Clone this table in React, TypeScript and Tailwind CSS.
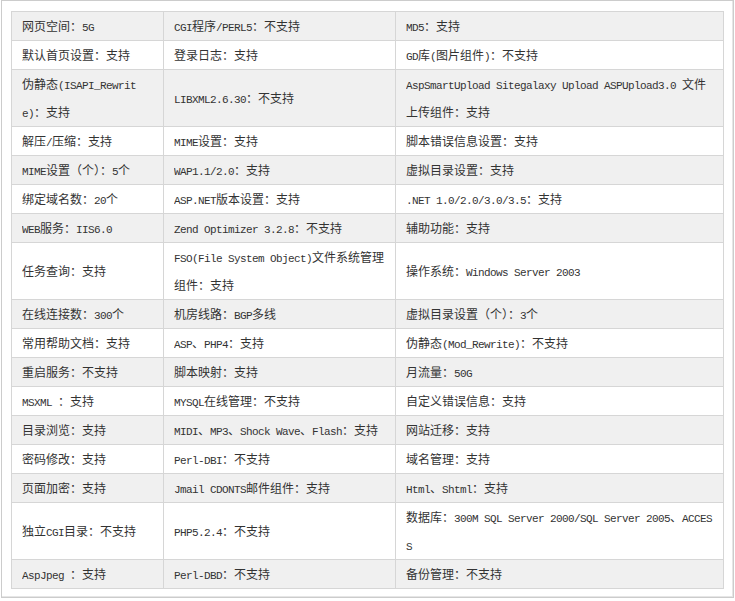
import React from 'react';

// each cell: "\n" marks where the reference wraps the line
const rows: string[][] = [
  ['网页空间：5G', 'CGI程序/PERL5：不支持', 'MD5：支持'],
  ['默认首页设置：支持', '登录日志：支持', 'GD库(图片组件)：不支持'],
  ['伪静态(ISAPI_Rewrit\ne)：支持', 'LIBXML2.6.30：不支持', 'AspSmartUpload Sitegalaxy Upload ASPUpload3.0 文件\n上传组件：支持'],
  ['解压/压缩：支持', 'MIME设置：支持', '脚本错误信息设置：支持'],
  ['MIME设置（个）：5个', 'WAP1.1/2.0：支持', '虚拟目录设置：支持'],
  ['绑定域名数：20个', 'ASP.NET版本设置：支持', '.NET 1.0/2.0/3.0/3.5：支持'],
  ['WEB服务：IIS6.0', 'Zend Optimizer 3.2.8：不支持', '辅助功能：支持'],
  ['任务查询：支持', 'FSO(File System Object)文件系统管理\n组件：支持', '操作系统：Windows Server 2003'],
  ['在线连接数：300个', '机房线路：BGP多线', '虚拟目录设置（个）：3个'],
  ['常用帮助文档：支持', 'ASP、PHP4：支持', '伪静态(Mod_Rewrite)：不支持'],
  ['重启服务：不支持', '脚本映射：支持', '月流量：50G'],
  ['MSXML ：支持', 'MYSQL在线管理：不支持', '自定义错误信息：支持'],
  ['目录浏览：支持', 'MIDI、MP3、Shock Wave、Flash：支持', '网站迁移：支持'],
  ['密码修改：支持', 'Perl-DBI：不支持', '域名管理：支持'],
  ['页面加密：支持', 'Jmail CDONTS邮件组件：支持', 'Html、Shtml：支持'],
  ['独立CGI目录：不支持', 'PHP5.2.4：不支持', '数据库：300M SQL Server 2000/SQL Server 2005、ACCES\nS'],
  ['AspJpeg ：支持', 'Perl-DBD：不支持', '备份管理：不支持'],
];

// latin runs are set in a narrow mono face so they take half a CJK cell, like SimSun
const Line: React.FC<{ text: string }> = ({ text }) => {
  const parts = text.split(/([\x20-\x7e]+)/).filter((p) => p.length > 0);
  return (
    <>
      {parts.map((p, i) =>
        /^[\x20-\x7e]+$/.test(p) ? (
          <span key={i} className="font-['Liberation_Mono',monospace] text-[11px] leading-none tracking-[-0.6px]">
            {p}
          </span>
        ) : (
          <span key={i} className="leading-none">{p}</span>
        )
      )}
    </>
  );
};

const Cell: React.FC<{ text: string }> = ({ text }) => {
  const lines = text.split('\n');
  return (
    <td className="border border-[#d6d6d6] px-[10px] py-0 align-middle whitespace-nowrap overflow-hidden">
      {lines.map((l, i) => (
        <div key={i} className="h-[28px] leading-[28px] overflow-hidden">
          <Line text={l} />
        </div>
      ))}
    </td>
  );
};

export default function App() {
  return (
    <div className="w-[735px] h-[601px] bg-white font-['Noto_Sans_CJK_SC',sans-serif] text-[12px] text-[#333]">
      <div className="ml-[1px] w-[733px] h-[598px] border border-[#cccccc] pt-[10px] pl-[9px] shadow-[inset_-1px_-1px_0_#e6e6e6]">
        <table className="w-[712px] table-fixed border-collapse">
          <colgroup>
            <col className="w-[152px]" />
            <col className="w-[232px]" />
            <col className="w-[328px]" />
          </colgroup>
          <tbody>
            {rows.map((r, i) => (
              <tr key={i} className={i % 2 === 0 ? 'bg-[#f0f0f0]' : 'bg-white'}>
                {r.map((c, j) => (
                  <Cell key={j} text={c} />
                ))}
              </tr>
            ))}
          </tbody>
        </table>
      </div>
    </div>
  );
}
